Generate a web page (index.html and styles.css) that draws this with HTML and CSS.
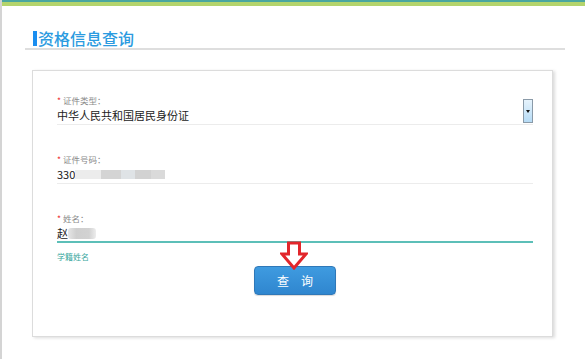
FILE: index.html
```html
<!DOCTYPE html>
<html lang="zh-CN">
<head>
	<meta charset="UTF-8">
	<title>资格信息查询</title>
	<link rel="stylesheet" href="styles.css">
</head>
<body>
<div class="topbar"></div>
<div class="page">
	<h2 class="title"><span class="mark"></span>资格信息查询</h2>
	<div class="card">
		<div class="field">
			<label><i>*</i> 证件类型：</label>
			<div class="value select">中华人民共和国居民身份证<span class="drop"></span></div>
		</div>
		<div class="field">
			<label><i>*</i> 证件号码：</label>
			<div class="value">330<span class="blur b1"></span><span class="blur b2"></span><span class="blur b3"></span><span class="blur b4"></span><span class="blur b6"></span></div>
		</div>
		<div class="field active">
			<label><i>*</i> 姓名：</label>
			<div class="value">赵<span class="blur b5"></span></div>
		</div>
		<p class="hint">学籍姓名</p>
		<div class="actions">
			<button class="btn">查&emsp;询</button>
			<!-- 红色箭头 -->
			<svg class="arrow" width="28" height="29" viewBox="0 0 28 29">
				<path d="M8.5 2 H19.5 V13 H26 L14 27 L2 13 H8.5 Z" fill="#fff" stroke="#e2262b" stroke-width="3"/>
			</svg>
		</div>
	</div>
</div>
</body>
</html>
```
FILE: styles.css
```css
*{
	margin: 0;
	padding: 0;
	box-sizing: border-box;
}
body{
	font-family: "Noto Sans CJK SC", "Liberation Sans", sans-serif;
	background: #fff;
	width: 585px;
	height: 359px;
	overflow: hidden;
	border-left: 2px solid #d4d4d4;
}
.topbar{
	height: 6px;
	border-top: 2px solid #4aa6a0;
	background: #b4d46c;
	margin-left: -2px;
}
.page{
	padding: 22px 20px 0 23px;
}
.title{
	display: flex;
	align-items: center;
	height: 22px;
	line-height: 20px;
	font-size: 16px;
	font-weight: 500;
	color: #2b9be0;
	padding-left: 8px;
	border-bottom: 2px solid #dedede;
}
.mark{
	width: 4px;
	height: 15px;
	background: #1b8ef0;
	margin-right: 1px;
}
.card{
	width: 521px;
	height: 267px;
	margin: 20px 0 0 7px;
	border: 1px solid #dcdcdc;
	box-shadow: 2px 1px 3px rgba(0,0,0,0.14);
	padding: 23px 19px 0 24px;
}
.field{
	height: 31px;
	margin-bottom: 28px;
	border-bottom: 1px solid #ececec;
}
.field label{
	display: block;
	font-size: 8.5px;
	line-height: 13px;
	color: #8a8a8a;
}
.field label i{
	font-style: normal;
	color: #e33;
}
.value{
	position: relative;
	display: flex;
	align-items: center;
	height: 16px;
	font-size: 11px;
	line-height: 16px;
	color: #222;
}
.select .drop{
	position: absolute;
	right: 0;
	top: -8px;
	width: 10px;
	height: 24px;
	border: 1px solid #8a9aa8;
	background: linear-gradient(#e6f3fc, #b6dbf5);
}
.select .drop::after{
	content: "";
	position: absolute;
	left: 2px;
	top: 10px;
	border-left: 2px solid transparent;
	border-right: 2px solid transparent;
	border-top: 3px solid #111;
}
.blur{
	display: inline-block;
	height: 9px;
}
.b1{ width: 26px; background: #ececec; }
.b2{ width: 20px; background: #d4d4d4; }
.b3{ width: 14px; background: #dfe3e6; }
.b4{ width: 16px; background: #d2d2d2; }
.b6{ width: 14px; background: #dadada; }
.b5{ width: 28px; height: 11px; background: linear-gradient(90deg, #e6e6e6, #cfcfcf 30%, #d2d2d2 75%, #ededed); border-radius: 3px; }
.field.active{
	border-bottom: 2px solid #5cbfb8;
	margin-bottom: 8px;
}
.hint{
	font-size: 8px;
	line-height: 12px;
	color: #3aa8a0;
}
.actions{
	position: relative;
	display: flex;
	justify-content: center;
	padding-top: 3px;
}
.btn{
	width: 82px;
	height: 29px;
	border: 1px solid #2f78b8;
	border-radius: 4px;
	background: linear-gradient(#3f9be0, #2f86cf);
	color: #fff;
	font-family: inherit;
	font-size: 12px;
	box-shadow: 0 1px 1px rgba(0,0,0,0.15);
}
.arrow{
	position: absolute;
	left: 223px;
	top: -22px;
}
```
